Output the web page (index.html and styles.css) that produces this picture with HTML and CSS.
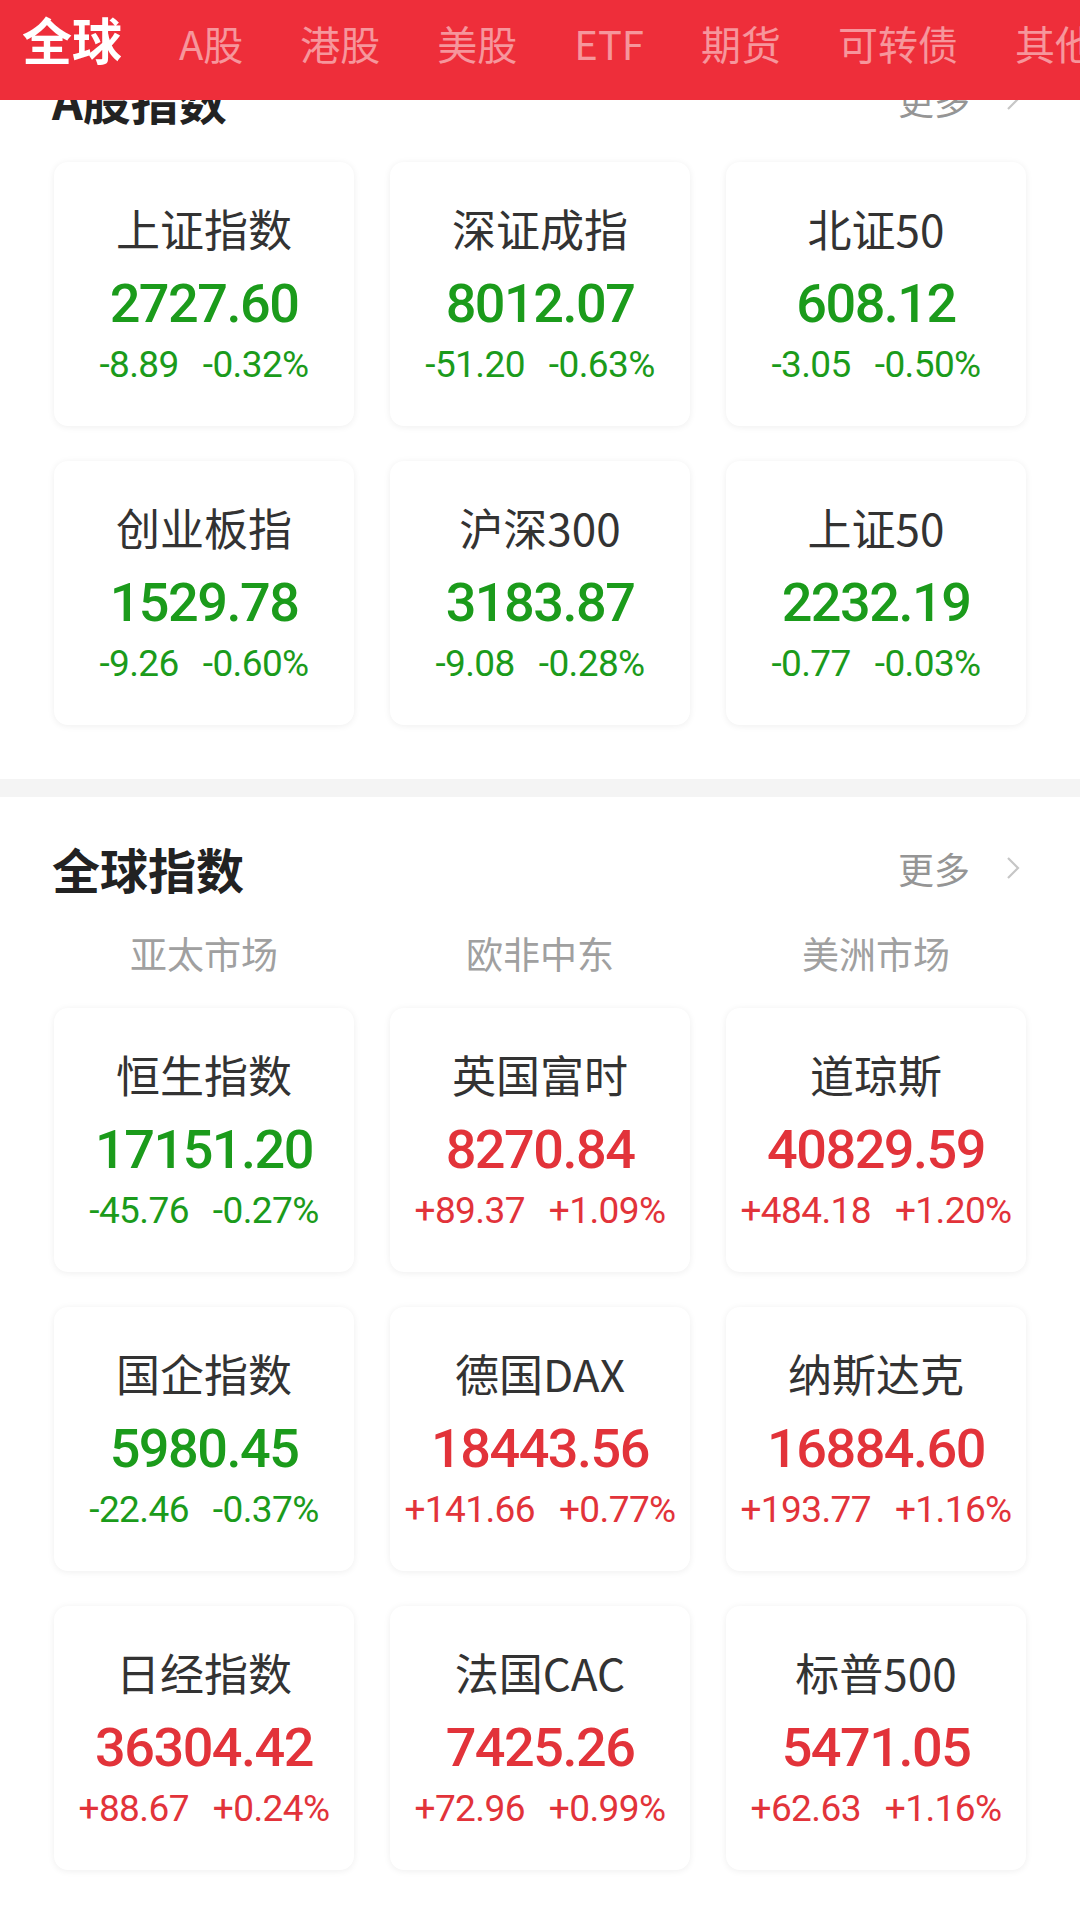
FILE: index.html
```html
<!DOCTYPE html>
<html lang="zh-CN">
<head>
    <meta charset="UTF-8">
    <meta name="viewport" content="width=device-width, initial-scale=1.0">
    <title>行情</title>
    <link rel="stylesheet" href="styles.css">
</head>
<body>

<div class="top-tabs">
    <span class="tab active">全球</span>
    <span class="tab">A股</span>
    <span class="tab">港股</span>
    <span class="tab">美股</span>
    <span class="tab">ETF</span>
    <span class="tab">期货</span>
    <span class="tab">可转债</span>
    <span class="tab">其他</span>
</div>

<div class="main">
    <div class="section">
        <div class="section-head">
            <h2>A股指数</h2>
            <span class="more">更多
                <svg width="14" height="24" viewBox="0 0 14 24"><path d="M2 2 L12 12 L2 22" fill="none" stroke="#c6c6c6" stroke-width="2.2"/></svg>
            </span>
        </div>
        <div class="cards">
            <div class="card down">
                <div class="name">上证指数</div>
                <div class="value">2727.60</div>
                <div class="change"><span>-8.89</span><span>-0.32%</span></div>
            </div>
            <div class="card down">
                <div class="name">深证成指</div>
                <div class="value">8012.07</div>
                <div class="change"><span>-51.20</span><span>-0.63%</span></div>
            </div>
            <div class="card down">
                <div class="name">北证50</div>
                <div class="value">608.12</div>
                <div class="change"><span>-3.05</span><span>-0.50%</span></div>
            </div>
            <div class="card down">
                <div class="name">创业板指</div>
                <div class="value">1529.78</div>
                <div class="change"><span>-9.26</span><span>-0.60%</span></div>
            </div>
            <div class="card down">
                <div class="name">沪深300</div>
                <div class="value">3183.87</div>
                <div class="change"><span>-9.08</span><span>-0.28%</span></div>
            </div>
            <div class="card down">
                <div class="name">上证50</div>
                <div class="value">2232.19</div>
                <div class="change"><span>-0.77</span><span>-0.03%</span></div>
            </div>
        </div>
    </div>

    <div class="divider"></div>

    <div class="section">
        <div class="section-head">
            <h2>全球指数</h2>
            <span class="more">更多
                <svg width="14" height="24" viewBox="0 0 14 24"><path d="M2 2 L12 12 L2 22" fill="none" stroke="#c6c6c6" stroke-width="2.2"/></svg>
            </span>
        </div>
        <div class="regions">
            <span>亚太市场</span>
            <span>欧非中东</span>
            <span>美洲市场</span>
        </div>
        <div class="cards">
            <div class="card down">
                <div class="name">恒生指数</div>
                <div class="value">17151.20</div>
                <div class="change"><span>-45.76</span><span>-0.27%</span></div>
            </div>
            <div class="card up">
                <div class="name">英国富时</div>
                <div class="value">8270.84</div>
                <div class="change"><span>+89.37</span><span>+1.09%</span></div>
            </div>
            <div class="card up">
                <div class="name">道琼斯</div>
                <div class="value">40829.59</div>
                <div class="change"><span>+484.18</span><span>+1.20%</span></div>
            </div>
            <div class="card down">
                <div class="name">国企指数</div>
                <div class="value">5980.45</div>
                <div class="change"><span>-22.46</span><span>-0.37%</span></div>
            </div>
            <div class="card up">
                <div class="name">德国DAX</div>
                <div class="value">18443.56</div>
                <div class="change"><span>+141.66</span><span>+0.77%</span></div>
            </div>
            <div class="card up">
                <div class="name">纳斯达克</div>
                <div class="value">16884.60</div>
                <div class="change"><span>+193.77</span><span>+1.16%</span></div>
            </div>
            <div class="card up">
                <div class="name">日经指数</div>
                <div class="value">36304.42</div>
                <div class="change"><span>+88.67</span><span>+0.24%</span></div>
            </div>
            <div class="card up">
                <div class="name">法国CAC</div>
                <div class="value">7425.26</div>
                <div class="change"><span>+72.96</span><span>+0.99%</span></div>
            </div>
            <div class="card up">
                <div class="name">标普500</div>
                <div class="value">5471.05</div>
                <div class="change"><span>+62.63</span><span>+1.16%</span></div>
            </div>
        </div>
    </div>
</div>

</body>
</html>
```

FILE: styles.css
```css
body {
    margin: 0;
    background: #fff;
    font-family: "Noto Sans CJK SC", "Noto Sans", sans-serif;
    color: #333;
}

.top-tabs {
    position: fixed;
    top: 0;
    left: 0;
    right: 0;
    z-index: 10;
    height: 100px;
    line-height: 76px;
    padding: 0 22px;
    background-color: #ee2e3a;
    display: flex;
    align-items: baseline;
    gap: 57px;
    white-space: nowrap;
    overflow: hidden;
}

.tab {
    font-size: 40px;
    color: rgba(255, 255, 255, 0.5);
}

.tab.active {
    font-size: 50px;
    font-weight: 700;
    color: #fff;
}

.main {
    padding-top: 28px;
}

.section {
    padding: 41px 54px 54px;
}

.section-head {
    display: flex;
    align-items: center;
    justify-content: space-between;
    margin-bottom: 33px;
    padding-right: 6px;
}

.section-head h2 {
    margin: 0 0 0 -2px;
    font-size: 48px;
    line-height: 60px;
    font-weight: 700;
    color: #222;
}

.more {
    display: flex;
    align-items: center;
    gap: 36px;
    font-size: 36px;
    color: #959595;
}

.regions {
    display: grid;
    grid-template-columns: repeat(3, 1fr);
    column-gap: 36px;
    margin-top: -2px;
    margin-bottom: 31px;
    text-align: center;
    font-size: 37px;
    line-height: 48px;
    color: #a0a0a0;
}

.cards {
    display: grid;
    grid-template-columns: repeat(3, 1fr);
    gap: 35px 36px;
}

.card {
    height: 264px;
    border-radius: 14px;
    background: #fff;
    box-shadow: 0 1px 7px rgba(0, 0, 0, 0.07);
    display: flex;
    flex-direction: column;
    align-items: center;
    justify-content: center;
}

.name {
    font-size: 44px;
    line-height: 52px;
    color: #333;
}

.value {
    margin-top: 20px;
    font-family: Roboto, "Liberation Sans", sans-serif;
    font-size: 54px;
    line-height: 60px;
    font-weight: 500;
    letter-spacing: -1.5px;
}

.change {
    margin-top: 9px;
    display: flex;
    gap: 24px;
    font-family: Roboto, "Liberation Sans", sans-serif;
    font-size: 37px;
    line-height: 44px;
    letter-spacing: -0.6px;
}

.down .value,
.down .change {
    color: #1b9b1b;
}

.up .value,
.up .change {
    color: #e2333a;
}

.divider {
    height: 18px;
    background: #f4f4f4;
}
```
